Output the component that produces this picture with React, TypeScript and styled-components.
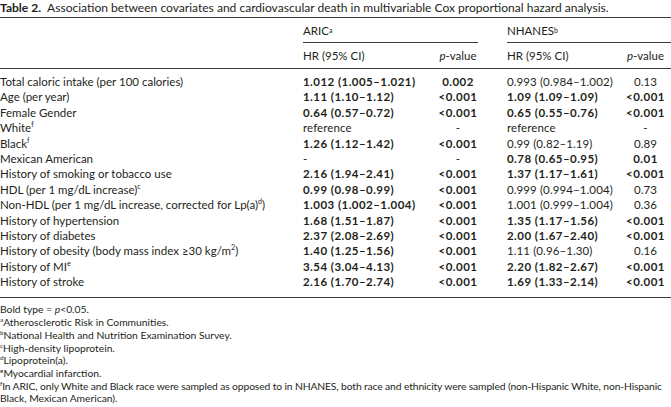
import React from "react";
import styled, { createGlobalStyle } from "styled-components";

const Global = createGlobalStyle`
  html, body { margin: 0; padding: 0; background: #ffffff; }
  body { font-family: "Lato", "Open Sans", sans-serif; color: #231f20; }
`;

const COLS = "303px 135px 40px 29px 113px 51px";

const Page = styled.div`
  width: 671px;
  display: flex;
  flex-direction: column;
`;

const Title = styled.div`
  height: 17px;
  box-sizing: border-box;
  padding-top: 1px;
  font-size: 12.05px;
  line-height: 14px;
  white-space: nowrap;
`;

const TitleLabel = styled.span`
  font-weight: 700;
  margin-right: 6px;
`;

const TableBox = styled.div`
  display: flex;
  flex-direction: column;
  font-size: 11.5px;
  border-top: 1px solid #3a3a3a;
  border-bottom: 1.5px solid #3a3a3a;
`;

const Head = styled.div`
  display: grid;
  grid-template-columns: ${COLS};
  grid-template-rows: 25px 25px;
  border-bottom: 1px solid #3a3a3a;
`;

const GroupCell = styled.div<{ $span?: number; $line?: boolean }>`
  grid-column: span ${(p) => p.$span ?? 1};
  display: flex;
  align-items: center;
  box-sizing: border-box;
  padding-top: 1px;
  border-bottom: ${(p) => (p.$line ? "1px solid #3a3a3a" : "none")};
`;

const HeadCell = styled.div<{ $center?: boolean }>`
  display: flex;
  align-items: center;
  justify-content: ${(p) => (p.$center ? "center" : "flex-start")};
  white-space: nowrap;
`;

const Italic = styled.i``;

const Body = styled.div`
  display: grid;
  grid-template-columns: ${COLS};
  grid-auto-rows: 15.4px;
  padding: 5px 0 8px;
`;

const Cell = styled.div<{ $bold?: boolean; $center?: boolean }>`
  line-height: 15.4px;
  white-space: nowrap;
  font-weight: ${(p) => (p.$bold ? 700 : 400)};
  letter-spacing: ${(p) => (p.$bold ? "0.45px" : "0.1px")};
  text-align: ${(p) => (p.$center ? "center" : "left")};
`;

const LabelCell = styled.div`
  line-height: 15.4px;
  white-space: nowrap;
`;

const Sup = styled.sup`
  font-size: 0.62em;
  line-height: 0;
  vertical-align: super;
`;

const Notes = styled.div`
  margin-top: 5px;
  display: flex;
  flex-direction: column;
  font-size: 10.3px;
  line-height: 12.7px;
`;

const Note = styled.div<{ $tight?: boolean }>`
  white-space: nowrap;
  letter-spacing: ${(p) => (p.$tight ? "-0.12px" : "0")};
`;

type Val = [string, boolean];
type Row = { label: React.ReactNode; cells: Val[] };

const rows: Row[] = [
  { label: "Total caloric intake (per 100 calories)", cells: [["1.012 (1.005–1.021)", true], ["0.002", true], ["0.993 (0.984–1.002)", false], ["0.13", false]] },
  { label: "Age (per year)", cells: [["1.11 (1.10–1.12)", true], ["<0.001", true], ["1.09 (1.09–1.09)", true], ["<0.001", true]] },
  { label: "Female Gender", cells: [["0.64 (0.57–0.72)", true], ["<0.001", true], ["0.65 (0.55–0.76)", true], ["<0.001", true]] },
  { label: <>White<Sup>f</Sup></>, cells: [["reference", false], ["-", false], ["reference", false], ["-", false]] },
  { label: <>Black<Sup>f</Sup></>, cells: [["1.26 (1.12–1.42)", true], ["<0.001", true], ["0.99 (0.82–1.19)", false], ["0.89", false]] },
  { label: "Mexican American", cells: [["-", false], ["-", false], ["0.78 (0.65–0.95)", true], ["0.01", true]] },
  { label: "History of smoking or tobacco use", cells: [["2.16 (1.94–2.41)", true], ["<0.001", true], ["1.37 (1.17–1.61)", true], ["<0.001", true]] },
  { label: <>HDL (per 1 mg/dL increase)<Sup>c</Sup></>, cells: [["0.99 (0.98–0.99)", true], ["<0.001", true], ["0.999 (0.994–1.004)", false], ["0.73", false]] },
  { label: <>Non-HDL (per 1 mg/dL increase, corrected for Lp(a)<Sup>d</Sup>)</>, cells: [["1.003 (1.002–1.004)", true], ["<0.001", true], ["1.001 (0.999–1.004)", false], ["0.36", false]] },
  { label: "History of hypertension", cells: [["1.68 (1.51–1.87)", true], ["<0.001", true], ["1.35 (1.17–1.56)", true], ["<0.001", true]] },
  { label: "History of diabetes", cells: [["2.37 (2.08–2.69)", true], ["<0.001", true], ["2.00 (1.67–2.40)", true], ["<0.001", true]] },
  { label: <>History of obesity (body mass index ≥30 kg/m<Sup>2</Sup>)</>, cells: [["1.40 (1.25–1.56)", true], ["<0.001", true], ["1.11 (0.96–1.30)", false], ["0.16", false]] },
  { label: <>History of MI<Sup>e</Sup></>, cells: [["3.54 (3.04–4.13)", true], ["<0.001", true], ["2.20 (1.82–2.67)", true], ["<0.001", true]] },
  { label: "History of stroke", cells: [["2.16 (1.70–2.74)", true], ["<0.001", true], ["1.69 (1.33–2.14)", true], ["<0.001", true]] },
];

export default function App() {
  return (
    <Page>
      <Global />
      <Title>
        <TitleLabel>Table 2.</TitleLabel>
        Association between covariates and cardiovascular death in multivariable Cox proportional hazard analysis.
      </Title>
      <TableBox>
        <Head>
          <GroupCell />
          <GroupCell $span={2} $line>ARIC<Sup>a</Sup></GroupCell>
          <GroupCell />
          <GroupCell $span={2} $line>NHANES<Sup>b</Sup></GroupCell>
          <HeadCell />
          <HeadCell>HR (95% CI)</HeadCell>
          <HeadCell $center><Italic>p</Italic>-value</HeadCell>
          <HeadCell />
          <HeadCell>HR (95% CI)</HeadCell>
          <HeadCell $center><Italic>p</Italic>-value</HeadCell>
        </Head>
        <Body>
          {rows.map((r, i) => (
            <React.Fragment key={i}>
              <LabelCell>{r.label}</LabelCell>
              <Cell $bold={r.cells[0][1]}>{r.cells[0][0]}</Cell>
              <Cell $bold={r.cells[1][1]} $center>{r.cells[1][0]}</Cell>
              <Cell />
              <Cell $bold={r.cells[2][1]}>{r.cells[2][0]}</Cell>
              <Cell $bold={r.cells[3][1]} $center>{r.cells[3][0]}</Cell>
            </React.Fragment>
          ))}
        </Body>
      </TableBox>
      <Notes>
        <Note>Bold type = <Italic>p</Italic>&lt;0.05.</Note>
        <Note><Sup>a</Sup>Atherosclerotic Risk in Communities.</Note>
        <Note><Sup>b</Sup>National Health and Nutrition Examination Survey.</Note>
        <Note><Sup>c</Sup>High-density lipoprotein.</Note>
        <Note><Sup>d</Sup>Lipoprotein(a).</Note>
        <Note><Sup>e</Sup>Myocardial infarction.</Note>
        <Note $tight><Sup>f</Sup>In ARIC, only White and Black race were sampled as opposed to in NHANES, both race and ethnicity were sampled (non-Hispanic White, non-Hispanic</Note>
        <Note>Black, Mexican American).</Note>
      </Notes>
    </Page>
  );
}
